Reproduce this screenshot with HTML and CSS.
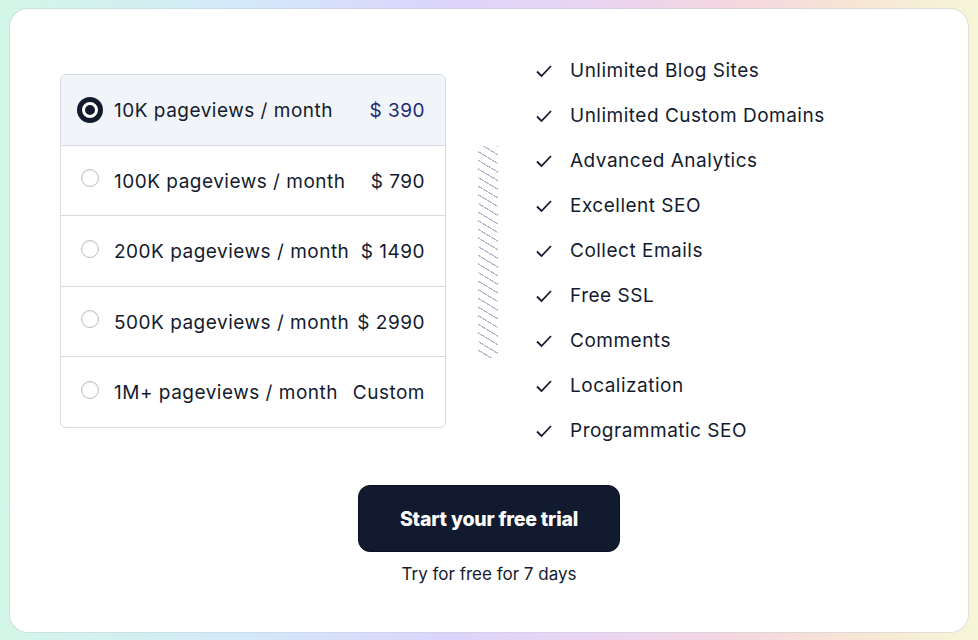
FILE: index.html
```html
<!DOCTYPE html>
<html lang="en">
<head>
    <meta charset="UTF-8">
    <meta name="viewport" content="width=device-width, initial-scale=1.0">
    <title>Pricing</title>
    <link rel="stylesheet" href="styles.css">
</head>
<body>
    <div class="pricing-card">
        <div class="pricing-body">
            <div class="plan-table">
                <label class="plan-row selected">
                    <span class="radio"></span>
                    <span class="plan-name">10K pageviews / month</span>
                    <span class="plan-price">$ 390</span>
                </label>
                <label class="plan-row">
                    <span class="radio"></span>
                    <span class="plan-name">100K pageviews / month</span>
                    <span class="plan-price">$ 790</span>
                </label>
                <label class="plan-row">
                    <span class="radio"></span>
                    <span class="plan-name">200K pageviews / month</span>
                    <span class="plan-price">$ 1490</span>
                </label>
                <label class="plan-row">
                    <span class="radio"></span>
                    <span class="plan-name">500K pageviews / month</span>
                    <span class="plan-price">$ 2990</span>
                </label>
                <label class="plan-row">
                    <span class="radio"></span>
                    <span class="plan-name">1M+ pageviews / month</span>
                    <span class="plan-price">Custom</span>
                </label>
            </div>

            <div class="hatch"></div>

            <ul class="feature-list">
                <li><svg class="check" viewBox="0 0 16 12"><path d="M1 6.5l4.5 4.5L15 1"/></svg>Unlimited Blog Sites</li>
                <li><svg class="check" viewBox="0 0 16 12"><path d="M1 6.5l4.5 4.5L15 1"/></svg>Unlimited Custom Domains</li>
                <li><svg class="check" viewBox="0 0 16 12"><path d="M1 6.5l4.5 4.5L15 1"/></svg>Advanced Analytics</li>
                <li><svg class="check" viewBox="0 0 16 12"><path d="M1 6.5l4.5 4.5L15 1"/></svg>Excellent SEO</li>
                <li><svg class="check" viewBox="0 0 16 12"><path d="M1 6.5l4.5 4.5L15 1"/></svg>Collect Emails</li>
                <li><svg class="check" viewBox="0 0 16 12"><path d="M1 6.5l4.5 4.5L15 1"/></svg>Free SSL</li>
                <li><svg class="check" viewBox="0 0 16 12"><path d="M1 6.5l4.5 4.5L15 1"/></svg>Comments</li>
                <li><svg class="check" viewBox="0 0 16 12"><path d="M1 6.5l4.5 4.5L15 1"/></svg>Localization</li>
                <li><svg class="check" viewBox="0 0 16 12"><path d="M1 6.5l4.5 4.5L15 1"/></svg>Programmatic SEO</li>
            </ul>
        </div>

        <div class="cta">
            <button class="trial-button">Start your free trial</button>
            <div class="trial-note">Try for free for 7 days</div>
        </div>
    </div>
</body>
</html>
```

FILE: styles.css
```css
body {
    margin: 0;
    padding: 9px 10px 8px 10px;
    height: 640px;
    box-sizing: border-box;
    font-family: Inter, "Noto Sans", sans-serif;
    color: #111827;
    background: linear-gradient(90deg, #d3f6e7 0%, #d3e9fa 25%, #dbd4fb 45%, #e9d4f3 60%, #f5d6df 75%, #f7e6d4 88%, #f6f6d8 100%);
}
.pricing-card {
    background-color: white;
    border-radius: 18px;
    height: 623px;
    box-sizing: border-box;
    box-shadow: 0 0 0 1px rgba(200, 205, 215, 0.5);
    padding-top: 39px;
}
.pricing-body {
    display: flex;
    align-items: center;
    padding-left: 50px;
}
.plan-table {
    width: 386px;
    box-sizing: border-box;
    border: 1px solid #d6dae1;
    border-radius: 6px;
    overflow: hidden;
}
.plan-row {
    display: flex;
    align-items: center;
    box-sizing: border-box;
    height: 70.5px;
    padding: 2px 20px 0 16px;
    border-top: 1px solid #d6dae1;
    font-size: 19px;
    letter-spacing: 0.5px;
    color: #131b2e;
}
.plan-row:first-child {
    border-top: none;
    height: 70px;
}
.plan-row.selected {
    background-color: #f1f4f9;
}
.radio {
    width: 26px;
    height: 26px;
    margin-right: 11px;
    display: flex;
    align-items: center;
    justify-content: center;
    margin-top: -2px;
}
.radio::before {
    content: "";
    width: 16px;
    height: 16px;
    border-radius: 50%;
    border: 1px solid #b9bec8;
    box-shadow: inset 0 1px 2px rgba(0, 0, 0, 0.08);
    margin-top: -4px;
}
.selected .radio::before {
    width: 10px;
    height: 10px;
    margin-top: 0;
    background-color: #131b2e;
    border: 3px solid white;
    box-shadow: 0 0 0 5px #131b2e;
}
.plan-name {
    flex: 1;
}
.selected .plan-price {
    color: #1d2a73;
}
.hatch {
    width: 20px;
    height: 212px;
    margin: 2px 38px 0 32px;
    background: repeating-linear-gradient(31deg, transparent 0 6.2px, #b4bbc8 6.2px 7.4px);
}
.feature-list {
    list-style: none;
    margin: 0;
    padding: 0;
}
.feature-list li {
    display: flex;
    align-items: center;
    height: 45px;
    font-size: 19px;
    color: #131b2e;
    letter-spacing: 0.5px;
}
.check {
    width: 16px;
    height: 12px;
    margin-right: 18px;
    fill: none;
    stroke: #131b2e;
    stroke-width: 1.8;
}
.cta {
    display: flex;
    flex-direction: column;
    align-items: center;
    margin-top: 32px;
}
.trial-button {
    width: 262px;
    height: 67px;
    border: 1px solid #0b1020;
    border-radius: 12px;
    background-color: #121a2f;
    color: white;
    font-family: Inter, sans-serif;
    font-size: 19.5px;
    font-weight: 800;
    letter-spacing: -0.2px;
    cursor: pointer;
}
.trial-note {
    margin-top: 12px;
    font-size: 17px;
    color: #131b2e;
}
```
